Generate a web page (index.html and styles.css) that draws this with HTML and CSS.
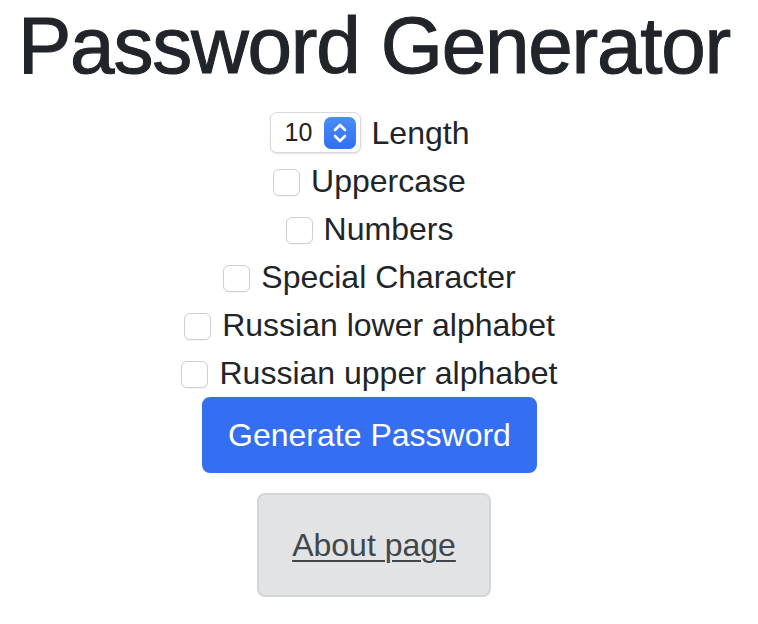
FILE: index.html
```html
<!DOCTYPE html>
<html lang="en">
<head>
<meta charset="utf-8">
<title>Password Generator</title>
<link rel="stylesheet" href="styles.css">
</head>
<body>
<div class="page">
  <h1 class="title">Password Generator</h1>
  <form class="form">
    <div class="row">
      <span class="number">
        <span class="number-value">10</span>
        <svg class="spinner" width="32" height="32" viewBox="0 0 32 32" aria-hidden="true">
          <defs>
            <linearGradient id="g" x1="0" y1="0" x2="0" y2="1">
              <stop offset="0" stop-color="#4a8cf8"/>
              <stop offset="1" stop-color="#2f6ff2"/>
            </linearGradient>
          </defs>
          <rect x="0" y="0" width="32" height="32" rx="7" fill="url(#g)"/>
          <path d="M11 13 L16 8 L21 13" fill="none" stroke="#fff" stroke-width="2.6" stroke-linecap="round" stroke-linejoin="round"/>
          <path d="M11 19 L16 24 L21 19" fill="none" stroke="#fff" stroke-width="2.6" stroke-linecap="round" stroke-linejoin="round"/>
        </svg>
      </span>
      <span class="label">Length</span>
    </div>
    <label class="row"><span class="check"></span><span class="label">Uppercase</span></label>
    <label class="row"><span class="check"></span><span class="label">Numbers</span></label>
    <label class="row"><span class="check"></span><span class="label">Special Character</span></label>
    <label class="row"><span class="check"></span><span class="label">Russian lower alphabet</span></label>
    <label class="row"><span class="check"></span><span class="label">Russian upper alphabet</span></label>
    <button type="button" class="btn">Generate Password</button>
  </form>
  <div class="about"><a href="#" class="about-link">About page</a></div>
</div>
</body>
</html>
```

FILE: styles.css
```css
html, body {
  margin: 0;
  padding: 0;
  background: #fff;
}
body {
  font-family: "Liberation Sans", Arial, sans-serif;
  color: #212529;
  font-size: 32px;
  line-height: 48px;
}
.page {
  width: 748px;
  display: flex;
  flex-direction: column;
  align-items: center;
}
.title {
  margin: 0 0 17px 0;
  font-size: 80px;
  line-height: 92px;
  font-weight: 400;
  letter-spacing: -1.2px;
  color: #212529;
  -webkit-text-stroke: 1.1px #212529;
}
.form {
  display: flex;
  flex-direction: column;
  align-items: center;
  padding-right: 9px;
}
.row {
  display: flex;
  align-items: center;
  gap: 11px;
  height: 48px;
}
.number {
  display: flex;
  align-items: center;
  justify-content: space-between;
  box-sizing: border-box;
  width: 91px;
  height: 41px;
  padding: 0 4px 0 14px;
  border: 1px solid #d9d9d9;
  border-radius: 7px;
  box-shadow: 0 1px 2px rgba(0,0,0,0.12);
  background: #fff;
  margin-top: -1px;
}
.number-value {
  font-size: 25px;
  line-height: 25px;
  color: #222;
}
.spinner {
  display: block;
}
.check {
  display: block;
  box-sizing: border-box;
  width: 27px;
  height: 27px;
  border: 1.5px solid #cfcfcf;
  border-radius: 6px;
  background: #fff;
  box-shadow: 0 1px 1px rgba(0,0,0,0.05);
  margin-top: 2px;
}
.label {
  white-space: nowrap;
}
.btn {
  margin-top: 0;
  font-family: inherit;
  font-size: 32px;
  line-height: 48px;
  padding: 12px 24px;
  color: #fff;
  background: #346ff1;
  border: 2px solid #346ff1;
  border-radius: 8px;
}
.about {
  margin-top: 20px;
  box-sizing: border-box;
  padding: 26px 33px;
  background: #e2e3e5;
  border: 2px solid #d3d6d8;
  border-radius: 8px;
}
.about-link {
  color: #41464b;
  text-decoration: underline;
  text-decoration-thickness: 2px;
  text-underline-offset: 4px;
}
```
